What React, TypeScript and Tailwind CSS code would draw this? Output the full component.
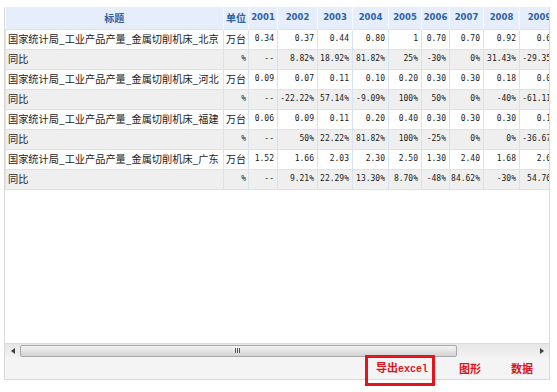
import React from 'react';

const years = ['2001', '2002', '2003', '2004', '2005', '2006', '2007', '2008', '2009'];
const widths = [29, 40, 35, 36, 33, 28, 34, 36, 40];

type Row = { title: string; unit: string; values: string[]; ratio?: boolean };

const rows: Row[] = [
  { title: '国家统计局_工业产品产量_金属切削机床_北京', unit: '万台', values: ['0.34', '0.37', '0.44', '0.80', '1', '0.70', '0.70', '0.92', '0.65'] },
  { title: '同比', unit: '%', ratio: true, values: ['--', '8.82%', '18.92%', '81.82%', '25%', '-30%', '0%', '31.43%', '-29.35%'] },
  { title: '国家统计局_工业产品产量_金属切削机床_河北', unit: '万台', values: ['0.09', '0.07', '0.11', '0.10', '0.20', '0.30', '0.30', '0.18', '0.07'] },
  { title: '同比', unit: '%', ratio: true, values: ['--', '-22.22%', '57.14%', '-9.09%', '100%', '50%', '0%', '-40%', '-61.11%'] },
  { title: '国家统计局_工业产品产量_金属切削机床_福建', unit: '万台', values: ['0.06', '0.09', '0.11', '0.20', '0.40', '0.30', '0.30', '0.30', '0.19'] },
  { title: '同比', unit: '%', ratio: true, values: ['--', '50%', '22.22%', '81.82%', '100%', '-25%', '0%', '0%', '-36.67%'] },
  { title: '国家统计局_工业产品产量_金属切削机床_广东', unit: '万台', values: ['1.52', '1.66', '2.03', '2.30', '2.50', '1.30', '2.40', '1.68', '2.60'] },
  { title: '同比', unit: '%', ratio: true, values: ['--', '9.21%', '22.29%', '13.30%', '8.70%', '-48%', '84.62%', '-30%', '54.76%'] },
];

const cjk = "font-['Noto_Sans_CJK_SC','Noto_Sans',sans-serif]";
const mono = "font-['DejaVu_Sans_Mono','Noto_Sans_CJK_SC',monospace]";

function DataTable() {
  return (
    <table className="table-fixed border-collapse w-[554px] min-w-[554px]">
      <colgroup>
        <col className="w-[218px]" />
        <col className="w-[25px]" />
        {widths.map((w, i) => (
          <col key={i} style={{ width: w }} />
        ))}
      </colgroup>
      <thead>
        <tr className="h-[22px] bg-[#e5eefa]">
          <th className={`${cjk} text-[10px] font-bold text-[#2d62a8] border-r border-[#f6f9fd] text-center`}>标题</th>
          <th className={`${cjk} text-[10px] font-bold text-[#2d62a8] border-r border-[#f6f9fd] text-center`}>单位</th>
          {years.map((y) => (
            <th
              key={y}
              className="font-['DejaVu_Sans',sans-serif] text-[8.5px] font-bold text-[#2d62a8] border-r border-[#f6f9fd] text-center whitespace-nowrap overflow-hidden"
            >
              {y}
            </th>
          ))}
        </tr>
      </thead>
      <tbody>
        {rows.map((r, i) => (
          <tr key={i} className={`h-[20px] ${r.ratio ? 'bg-[#efefef]' : 'bg-white'}`}>
            <td className={`${cjk} text-[10.2px] text-[#222] pl-[2px] border border-[#d8e3f1] whitespace-nowrap overflow-hidden leading-none`}>
              {r.title}
            </td>
            <td
              className={`${r.ratio ? mono + ' text-[8px]' : cjk + ' text-[10px]'} text-[#222] text-right pr-[2px] border border-[#d8e3f1] whitespace-nowrap leading-none`}
            >
              {r.unit}
            </td>
            {r.values.map((v, j) => (
              <td
                key={j}
                className={`${mono} text-[8px] text-[#1a1a1a] text-right pr-[3px] border border-[#d8e3f1] whitespace-nowrap overflow-hidden leading-none`}
              >
                {v}
              </td>
            ))}
          </tr>
        ))}
      </tbody>
    </table>
  );
}

function ScrollBar() {
  return (
    <div className="h-[14px] flex items-center bg-gradient-to-b from-[#e6e6e6] to-[#f2f2f2] border-t border-[#dcdcdc]">
      <div className="w-[15px] flex justify-center">
        <svg width="4" height="6" viewBox="0 0 4 6">
          <path d="M4 0 L0 3 L4 6 Z" fill="#404040" />
        </svg>
      </div>
      <div className="w-[437px] h-[12px] rounded-[2px] border border-[#a9a9a9] bg-gradient-to-b from-[#f4f4f4] via-[#e4e4e4] to-[#d2d2d2] flex items-center justify-center">
        <span className="ml-[-2px] flex gap-[1px]">
          <span className="w-[1px] h-[5px] bg-[#555]" />
          <span className="w-[1px] h-[5px] bg-[#555]" />
          <span className="w-[1px] h-[5px] bg-[#555]" />
        </span>
      </div>
      <div className="flex-1" />
      <div className="w-[15px] flex justify-center">
        <svg width="4" height="6" viewBox="0 0 4 6">
          <path d="M0 0 L4 3 L0 6 Z" fill="#404040" />
        </svg>
      </div>
    </div>
  );
}

export default function App() {
  return (
    <div className="w-[557px] h-[392px] bg-white relative">
      <div className="ml-[4px] mt-[7px] w-[546px] h-[373px] border-l border-r border-b border-[#d9d9d9] flex flex-col">
        <div className="h-[336px] overflow-hidden bg-white">
          <DataTable />
        </div>
        <ScrollBar />
        <div className="flex-1 bg-[#f4f4f4] flex items-center justify-end pr-[16px] text-[#d9141c] font-bold">
          <span className={`${cjk} text-[11px] leading-none`}>
            导出<span className="font-['Liberation_Mono',monospace] text-[10px]">excel</span>
          </span>
          <span className={`${cjk} text-[11px] leading-none ml-[31px]`}>图形</span>
          <span className={`${cjk} text-[11px] leading-none ml-[30px]`}>数据</span>
        </div>
      </div>
      <div className="absolute left-[365px] top-[348px] w-[70px] h-[31px] border-[3px] border-[#e3141d]" />
    </div>
  );
}
